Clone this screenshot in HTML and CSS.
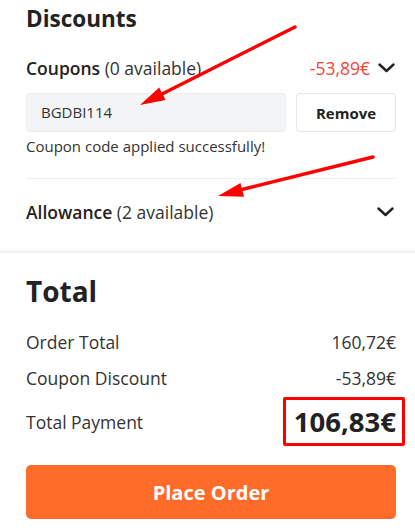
FILE: index.html
```html
<!DOCTYPE html>
<html>
<head>
<meta charset="utf-8">
<link rel="stylesheet" href="styles.css">
</head>
<body>
<div class="page">
  <section class="section discounts">
    <h2 class="title-sm">Discounts</h2>
    <div class="row coupon-head">
      <div class="label"><span class="strong">Coupons</span> (0 available)</div>
      <div class="right">
        <span class="neg">-53,89€</span>
        <svg class="chev" width="17" height="10" viewBox="0 0 17 10"><polyline points="1.5,1.5 8.5,8 15.5,1.5" fill="none" stroke="#222" stroke-width="2.4" stroke-linecap="round" stroke-linejoin="round"/></svg>
      </div>
    </div>
    <div class="coupon-form">
      <div class="coupon-input">BGDBI114</div>
      <button class="remove-btn">Remove</button>
    </div>
    <p class="msg">Coupon code applied successfully!</p>
    <div class="divider"></div>
    <div class="row allowance">
      <div class="label"><span class="strong">Allowance</span> (2 available)</div>
      <svg class="chev" width="17" height="10" viewBox="0 0 17 10"><polyline points="1.5,1.5 8.5,8 15.5,1.5" fill="none" stroke="#222" stroke-width="2.4" stroke-linecap="round" stroke-linejoin="round"/></svg>
    </div>
  </section>
  <section class="section totals">
    <h2 class="title-lg">Total</h2>
    <div class="lines">
      <div class="row line"><span>Order Total</span><span>160,72€</span></div>
      <div class="row line"><span>Coupon Discount</span><span>-53,89€</span></div>
      <div class="row line pay"><span>Total Payment</span><span class="amount">106,83€</span></div>
    </div>
    <button class="place-btn">Place Order</button>
  </section>
  <svg class="annot" width="415" height="530" viewBox="0 0 415 530">
    <line x1="295" y1="27" x2="160" y2="95" stroke="#f00" stroke-width="3.5" stroke-linecap="round"/>
    <polygon points="140,105 165.5,100 159.2,87.5" fill="#f00"/>
    <line x1="373" y1="157" x2="240" y2="190" stroke="#f00" stroke-width="3.5" stroke-linecap="round"/>
    <polygon points="218,196 244,196.7 240.5,183.1" fill="#f00"/>
  </svg>
</div>
</body>
</html>
```

FILE: styles.css
```css
* { box-sizing: border-box; }
html, body { margin: 0; padding: 0; background: #fff; }
body {
  font-family: "Open Sans", "Noto Sans", sans-serif;
  color: #333;
  width: 415px;
  height: 530px;
  overflow: hidden;
}
.page { position: relative; }
.section { padding: 0 19px 0 26px; }
.discounts {
  padding-top: 4px;
  padding-bottom: 26px;
  border-bottom: 3px solid #f2f3f5;
}
.title-sm {
  margin: 0;
  font-size: 22.5px;
  line-height: 30px;
  font-weight: 700;
  color: #222;
}
.title-lg {
  margin: 0;
  font-size: 28px;
  line-height: 38px;
  font-weight: 700;
  color: #222;
}
.row {
  display: flex;
  justify-content: space-between;
  align-items: center;
}
.label { font-size: 17.5px; line-height: 24px; color: #333; }
.strong { font-weight: 600; color: #222; }
.coupon-head { margin-top: 22px; }
.right { display: flex; align-items: center; gap: 8px; }
.neg { font-size: 17.5px; line-height: 24px; color: #f5453a; }
.chev { display: block; }
.coupon-form {
  display: flex;
  gap: 10px;
  margin-top: 13px;
}
.coupon-input {
  width: 260px;
  height: 39px;
  background: #f3f4f6;
  border: 1px solid #ebedf0;
  border-radius: 4px;
  padding-left: 14px;
  font-size: 15px;
  line-height: 37px;
  color: #333;
}
.remove-btn {
  width: 100px;
  height: 39px;
  background: #fff;
  border: 1px solid #e6e6e6;
  border-radius: 4px;
  font-family: inherit;
  font-size: 15px;
  font-weight: 700;
  color: #222;
  padding: 0;
}
.msg {
  margin: 4px 0 0;
  font-size: 15px;
  line-height: 20px;
  color: #333;
}
.divider {
  height: 1px;
  background: #eeeff1;
  margin-top: 22px;
}
.allowance { margin-top: 21px; }
.allowance .chev { margin-right: 2px; }
.coupon-head .chev { margin-right: 1px; }
.totals { padding-top: 19px; }
.lines {
  display: flex;
  flex-direction: column;
  gap: 12px;
  margin-top: 20px;
}
.line { font-size: 17.5px; line-height: 24px; color: #333; }
.pay { margin-top: 1px; }
.amount {
  position: relative;
  font-size: 27.5px;
  line-height: 38px;
  font-weight: 700;
  color: #222;
}
.amount::after {
  content: "";
  position: absolute;
  top: -6px;
  bottom: -5px;
  left: -11px;
  right: -9px;
  border: 3px solid #f00;
  border-radius: 2px;
}
.place-btn {
  display: block;
  width: 100%;
  height: 54px;
  margin-top: 24px;
  background: #ff6c2a;
  border: none;
  border-radius: 5px;
  color: #fff;
  font-family: inherit;
  font-size: 20px;
  font-weight: 700;
}
.annot {
  position: absolute;
  left: 0;
  top: 0;
  pointer-events: none;
}
```
